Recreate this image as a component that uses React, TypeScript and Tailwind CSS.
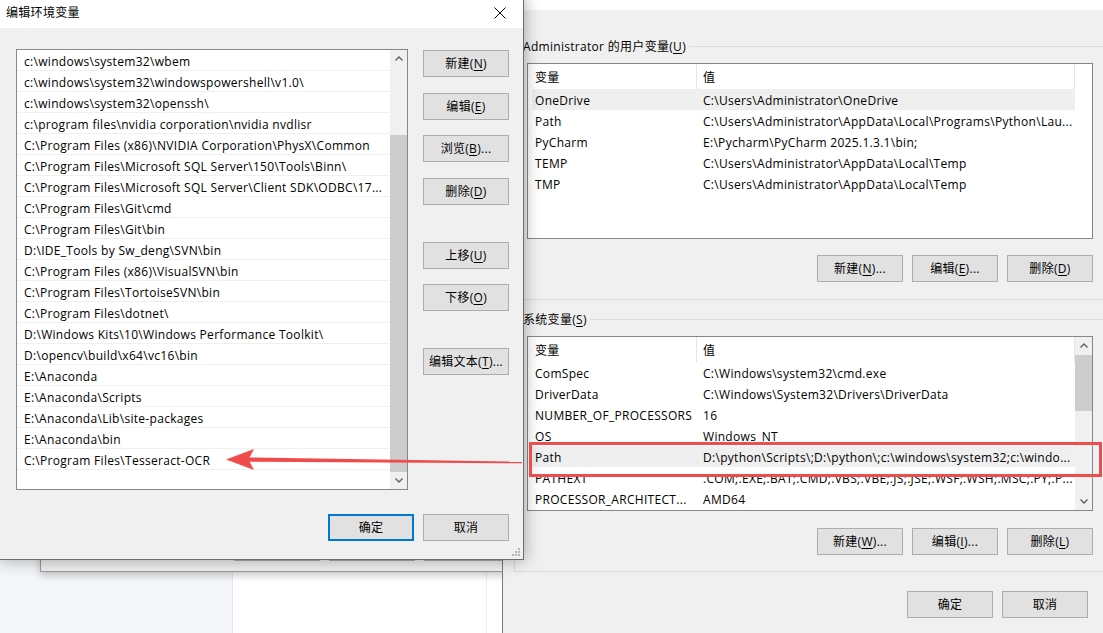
import React from 'react'

const raw = String.raw

// entries of the Path value being edited
const PATHS = [
  raw`c:\windows\system32\wbem`,
  raw`c:\windows\system32\windowspowershell\v1.0\ `.trim(),
  raw`c:\windows\system32\openssh\ `.trim(),
  raw`c:\program files\nvidia corporation\nvidia nvdlisr`,
  raw`C:\Program Files (x86)\NVIDIA Corporation\PhysX\Common`,
  raw`C:\Program Files\Microsoft SQL Server\150\Tools\Binn\ `.trim(),
  raw`C:\Program Files\Microsoft SQL Server\Client SDK\ODBC\17...`,
  raw`C:\Program Files\Git\cmd`,
  raw`C:\Program Files\Git\bin`,
  raw`D:\IDE_Tools by Sw_deng\SVN\bin`,
  raw`C:\Program Files (x86)\VisualSVN\bin`,
  raw`C:\Program Files\TortoiseSVN\bin`,
  raw`C:\Program Files\dotnet\ `.trim(),
  raw`D:\Windows Kits\10\Windows Performance Toolkit\ `.trim(),
  raw`D:\opencv\build\x64\vc16\bin`,
  raw`E:\Anaconda`,
  raw`E:\Anaconda\Scripts`,
  raw`E:\Anaconda\Lib\site-packages`,
  raw`E:\Anaconda\bin`,
  raw`C:\Program Files\Tesseract-OCR`,
]

const USER_VARS: [string, string][] = [
  ['OneDrive', raw`C:\Users\Administrator\OneDrive`],
  ['Path', raw`C:\Users\Administrator\AppData\Local\Programs\Python\Lau...`],
  ['PyCharm', raw`E:\Pycharm\PyCharm 2025.1.3.1\bin;`],
  ['TEMP', raw`C:\Users\Administrator\AppData\Local\Temp`],
  ['TMP', raw`C:\Users\Administrator\AppData\Local\Temp`],
]

const SYS_VARS: [string, string][] = [
  ['ComSpec', raw`C:\Windows\system32\cmd.exe`],
  ['DriverData', raw`C:\Windows\System32\Drivers\DriverData`],
  ['NUMBER_OF_PROCESSORS', '16'],
  ['OS', 'Windows_NT'],
  ['Path', raw`D:\python\Scripts\;D:\python\;c:\windows\system32;c:\windo...`],
  ['PATHEXT', '.COM;.EXE;.BAT;.CMD;.VBS;.VBE;.JS;.JSE;.WSF;.WSH;.MSC;.PY;.P...'],
  ['PROCESSOR_ARCHITECT...', 'AMD64'],
]

function Mn({ children }: { children: React.ReactNode }) {
  return <span className="underline decoration-1 underline-offset-[2px]">{children}</span>
}

function Btn({ children, primary = false }: { children: React.ReactNode; primary?: boolean }) {
  return (
    <div
      className={
        'flex h-[27px] w-[86px] shrink-0 items-center justify-center whitespace-nowrap bg-[#e1e1e1] pt-[1px] ' +
        (primary ? 'border-2 border-[#0078d7]' : 'border border-[#adadad]')
      }
    >
      {children}
    </div>
  )
}

function Chevron({ up = false }: { up?: boolean }) {
  return (
    <svg width="8" height="5" viewBox="0 0 8 5">
      <polyline
        points={up ? '0.5,4.5 4,1 7.5,4.5' : '0.5,0.5 4,4 7.5,0.5'}
        fill="none"
        stroke="#606060"
        strokeWidth="1.4"
      />
    </svg>
  )
}

function VScroll({ gap, thumb }: { gap: string; thumb: string }) {
  return (
    <div className="flex w-[17px] shrink-0 flex-col bg-[#f0f0f0]">
      <div className="flex h-[17px] shrink-0 items-center justify-center">
        <Chevron up />
      </div>
      <div className={gap} />
      <div className={thumb + ' bg-[#cdcdcd]'} />
      <div className="flex-1" />
      <div className="flex h-[17px] shrink-0 items-center justify-center">
        <Chevron />
      </div>
    </div>
  )
}

function ListView({
  rows,
  height,
  hi,
  scroll = false,
}: {
  rows: [string, string][]
  height: string
  hi: number
  scroll?: boolean
}) {
  return (
    <div className={'flex w-[566px] overflow-hidden border border-[#828790] bg-white ' + height}>
      <div className="w-[547px] shrink-0">
        <div className="flex h-[25px]">
          <div className="flex w-[169px] items-center border-r border-[#e5e5e5] pl-[7px] pt-[3px]">变量</div>
          <div className="flex w-[378px] items-center border-r border-[#e5e5e5] pl-[6px] pt-[3px]">值</div>
        </div>
        {rows.map(([k, v], i) => (
          <div
            key={k + i}
            className={'ml-[4px] flex h-[21px] w-[543px] items-center pt-[2px] ' + (i === hi ? 'bg-[#efefef]' : '')}
          >
            <div className="w-[165px] shrink-0 truncate pl-[3px]">{k}</div>
            <div className="min-w-0 flex-1 truncate pl-[6px]">{v}</div>
          </div>
        ))}
      </div>
      <div className="flex-1" />
      {scroll && <VScroll gap="h-[1px]" thumb="h-[56px]" />}
    </div>
  )
}

function SettingsWindow() {
  return (
    <div className="absolute left-0 top-[380px] z-0 flex h-[300px] w-[502px]">
      <div className="w-[233px] border-r border-[#e5e5e5] bg-[#f4f6f9]" />
      <div className="flex flex-1 bg-white">
        <div className="w-[254px] border-r border-[#ededed]" />
      </div>
    </div>
  )
}

function SystemPropsWindow() {
  return (
    <div className="absolute left-[40px] top-[90px] z-10 flex h-[482px] w-[480px] flex-col justify-end border border-[#9b9b9b] bg-[#f0f0f0] pb-[10px] pr-[9px] shadow-[0_3px_8px_rgba(0,0,0,0.22)]">
      <div className="flex justify-end gap-[9px]">
        <Btn>确定</Btn>
        <Btn>取消</Btn>
        <Btn>应用(A)</Btn>
      </div>
    </div>
  )
}

function EnvWindow() {
  return (
    <div className="absolute left-[502px] top-[-30px] z-20 flex h-[700px] w-[640px] flex-col border-l border-[#7a7a7a] bg-[#f0f0f0]">
      <div className="h-[40px] shrink-0 bg-white" />
      <div className="flex flex-col pl-[11px]">
        <fieldset className="mt-[27px] w-[600px] border border-[#dcdcdc] pb-[17px]">
          <legend className="ml-[8px] pr-[3px] pt-[2px] leading-[16px]">
            Administrator 的用户变量(<Mn>U</Mn>)
          </legend>
          <div className="ml-[12px] mt-[8px]">
            <ListView rows={USER_VARS} height="h-[176px]" hi={0} />
          </div>
          <div className="ml-[12px] mt-[16px] flex w-[566px] justify-end gap-[9px]">
            <Btn>
              新建(<Mn>N</Mn>)...
            </Btn>
            <Btn>
              编辑(<Mn>E</Mn>)...
            </Btn>
            <Btn>
              删除(<Mn>D</Mn>)
            </Btn>
          </div>
        </fieldset>

        <fieldset className="mt-[10px] w-[600px] border border-[#dcdcdc] pb-[16px]">
          <legend className="ml-[8px] pr-[3px] pt-[2px] leading-[16px]">
            系统变量(<Mn>S</Mn>)
          </legend>
          <div className="ml-[12px] mt-[8px]">
            <ListView rows={SYS_VARS} height="h-[175px]" hi={4} scroll />
          </div>
          <div className="ml-[12px] mt-[17px] flex w-[566px] justify-end gap-[9px]">
            <Btn>
              新建(<Mn>W</Mn>)...
            </Btn>
            <Btn>
              编辑(<Mn>I</Mn>)...
            </Btn>
            <Btn>
              删除(<Mn>L</Mn>)
            </Btn>
          </div>
        </fieldset>

        <div className="mt-[19px] flex w-[574px] justify-end gap-[9px]">
          <Btn>确定</Btn>
          <Btn>取消</Btn>
        </div>
      </div>
    </div>
  )
}

function Grip() {
  const dots = [
    [6, 0],
    [3, 3],
    [6, 3],
    [0, 6],
    [3, 6],
    [6, 6],
  ]
  return (
    <svg className="absolute bottom-[3px] right-[3px]" width="8" height="8" viewBox="0 0 8 8">
      {dots.map(([x, y]) => (
        <rect key={`${x}-${y}`} x={x} y={y} width="2" height="2" fill="#b4b4b4" />
      ))}
    </svg>
  )
}

function EditDialog() {
  return (
    <div className="absolute left-[-1px] top-[-4px] z-30 flex h-[564px] w-[525px] flex-col border border-[#6d6d6d] bg-[#f0f0f0] shadow-[0_0_16px_rgba(0,0,0,0.35)]">
      {/* title bar */}
      <div className="flex h-[31px] shrink-0 items-center justify-between bg-white pl-[6px] pr-[17px]">
        <span className="pt-[1px]">编辑环境变量</span>
        <svg width="12" height="12" viewBox="0 0 12 12">
          <path d="M0.5 0.5 L11.5 11.5 M11.5 0.5 L0.5 11.5" stroke="#000" strokeWidth="1" />
        </svg>
      </div>

      <div className="relative flex flex-1 flex-col">
        <div className="flex pl-[16px] pt-[21px]">
          {/* path list */}
          <div className="flex h-[441px] w-[392px] border border-[#828790] bg-white">
            <div className="w-[373px] shrink-0">
              {PATHS.map((p) => (
                <div
                  key={p}
                  className="flex h-[21px] items-center overflow-hidden text-ellipsis whitespace-nowrap border-b border-[#f0f0f0] pl-[7px] pt-[3px]"
                >
                  {p}
                </div>
              ))}
            </div>
            <VScroll gap="h-[68px]" thumb="h-[337px]" />
          </div>

          {/* side buttons */}
          <div className="ml-[15px] flex flex-col pt-[1px]">
            <Btn>
              新建(<Mn>N</Mn>)
            </Btn>
            <div className="mt-[16px]">
              <Btn>
                编辑(<Mn>E</Mn>)
              </Btn>
            </div>
            <div className="mt-[15px]">
              <Btn>
                浏览(<Mn>B</Mn>)...
              </Btn>
            </div>
            <div className="mt-[16px]">
              <Btn>
                删除(<Mn>D</Mn>)
              </Btn>
            </div>
            <div className="mt-[37px]">
              <Btn>
                上移(<Mn>U</Mn>)
              </Btn>
            </div>
            <div className="mt-[15px]">
              <Btn>
                下移(<Mn>O</Mn>)
              </Btn>
            </div>
            <div className="mt-[37px]">
              <Btn>
                编辑文本(<Mn>T</Mn>)...
              </Btn>
            </div>
          </div>
        </div>

        <div className="mt-[24px] flex justify-end gap-[9px] pr-[14px]">
          <Btn primary>确定</Btn>
          <Btn>取消</Btn>
        </div>

        <Grip />
      </div>
    </div>
  )
}

// red annotation drawn on top of the screenshot
function Annotation() {
  return (
    <svg
      className="pointer-events-none absolute left-0 top-0 z-40"
      width="1103"
      height="633"
      viewBox="0 0 1103 633"
    >
      <rect x="530.5" y="443.5" width="570" height="32" fill="none" stroke="#ef4d4d" strokeWidth="3" />
      <polygon points="248,457.4 522,461.6 522,463.2 248,461.8" fill="#ef4d4d" />
      <polygon points="226,459.5 254,449 248.5,459.6 254,470" fill="#ef4d4d" />
    </svg>
  )
}

export default function App() {
  return (
    <div className="relative h-[633px] w-[1103px] overflow-hidden bg-[#f0f0f0] font-['Open_Sans','Noto_Sans_CJK_SC',sans-serif] text-[12px] tracking-[0.3px] text-black">
      <SettingsWindow />
      <SystemPropsWindow />
      <EnvWindow />
      <EditDialog />
      <Annotation />
    </div>
  )
}
